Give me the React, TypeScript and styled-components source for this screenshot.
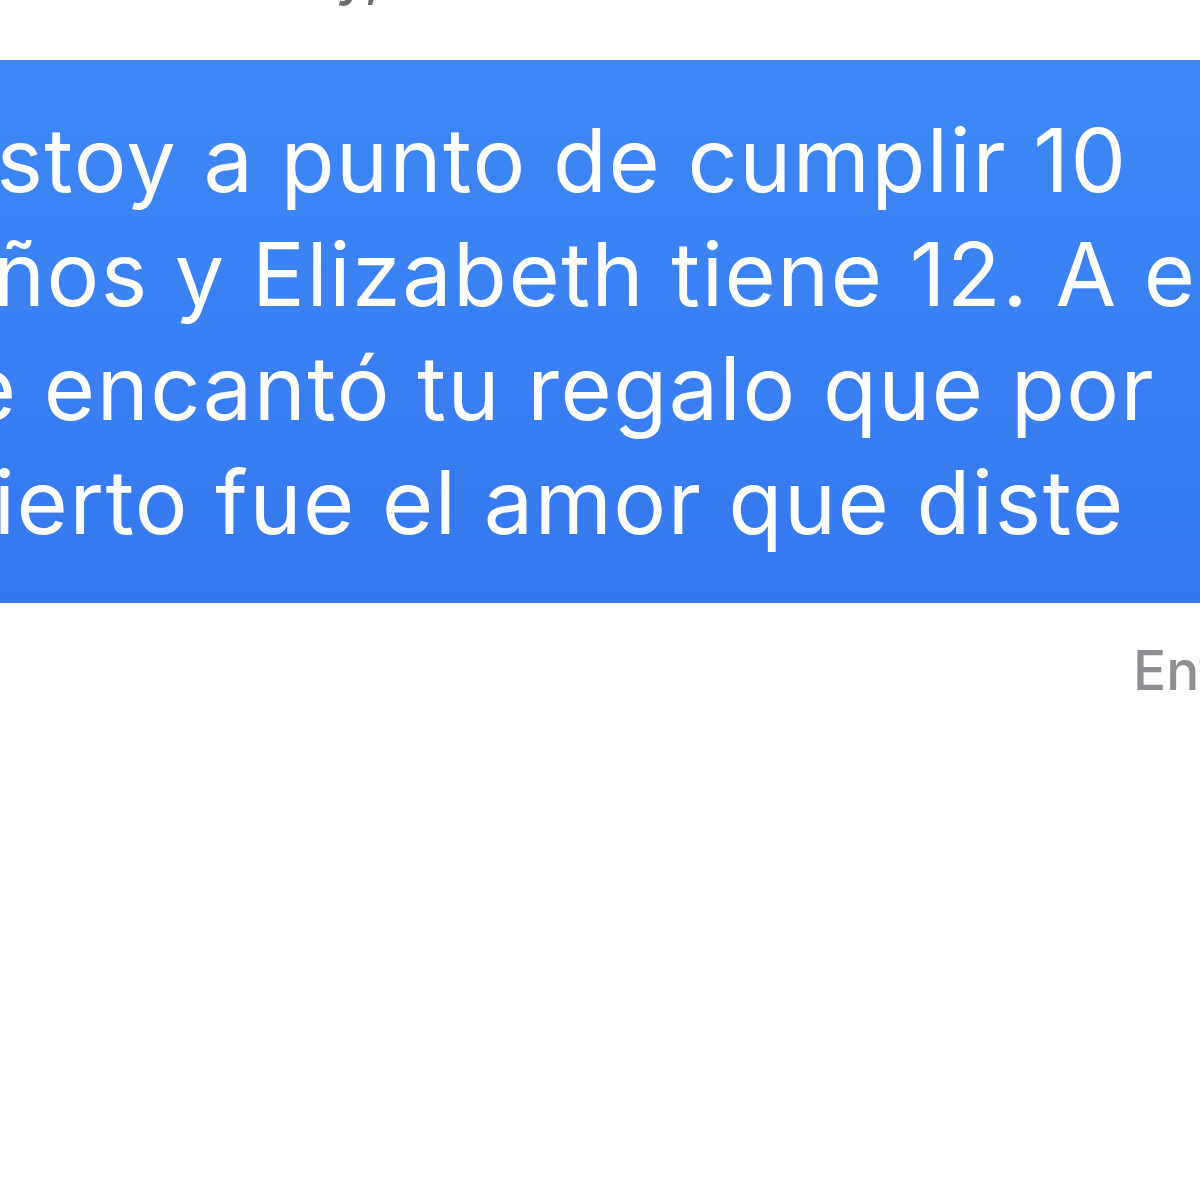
import React from 'react';
import styled, { createGlobalStyle } from 'styled-components';

const GlobalStyle = createGlobalStyle`
  html, body {
    margin: 0;
    padding: 0;
    background: #ffffff;
  }
  body {
    font-family: Inter, "Noto Sans", "Liberation Sans", sans-serif;
  }
`;

const Screen = styled.div`
  width: 1200px;
  height: 1200px;
  overflow: hidden;
  background: #ffffff;
  display: flex;
  flex-direction: column;
`;

const Timestamp = styled.div`
  height: 60px;
  padding-left: 262px;
  font-size: 55px;
  font-weight: 500;
  line-height: 1;
  color: #6b6b70;
  display: flex;
  align-items: flex-start;

  span {
    margin-top: -52px;
  }
`;

const Bubble = styled.div`
  margin: 0 -120px 0 -58px;
  padding: 43px 0 44px 0;
  background: linear-gradient(180deg, #3e88f6 0%, #3a80f3 50%, #3578f0 100%);
  color: #ffffff;
`;

const Line = styled.div`
  font-size: 88px;
  line-height: 114px;
  font-weight: 400;
  letter-spacing: 1.5px;
  white-space: nowrap;
`;

const Status = styled.div`
  padding: 40px 0 0 1133px;
  font-size: 55px;
  font-weight: 500;
  line-height: 1;
  color: #8e8e93;
  white-space: nowrap;
`;

const lines = [
  'Estoy a punto de cumplir 10',
  'años y Elizabeth tiene 12. A ella',
  'le encantó tu regalo que por',
  'cierto fue el amor que diste',
];

export default function App() {
  return (
    <>
      <GlobalStyle />
      <Screen>
        <Timestamp>
          <span>Hoy, 17:42</span>
        </Timestamp>
        <Bubble>
          {lines.map((text) => (
            <Line key={text}>{text}</Line>
          ))}
        </Bubble>
        <Status>Entregado</Status>
      </Screen>
    </>
  );
}
